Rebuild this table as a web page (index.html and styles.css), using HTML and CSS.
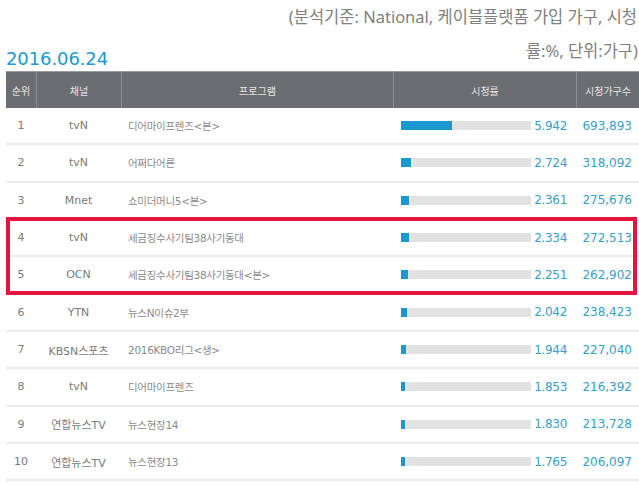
FILE: index.html
```html
<!DOCTYPE html>
<html lang="ko">
<head>
<meta charset="utf-8">
<link rel="stylesheet" href="styles.css">
</head>
<body>
<div class="page">
  <div class="note-top">(분석기준: National, 케이블플랫폼 가입 가구, 시청</div>
  <div class="title-row">
    <h2 class="date">2016.06.24</h2>
    <span class="note-bottom">률:%, 단위:가구)</span>
  </div>
  <div class="table-wrap">
    <table class="ratings">
      <colgroup>
        <col class="c-rank"><col class="c-ch"><col class="c-prog"><col class="c-rate"><col class="c-cnt">
      </colgroup>
      <thead>
        <tr><th>순위</th><th>채널</th><th>프로그램</th><th>시청률</th><th>시청가구수</th></tr>
      </thead>
      <tbody>
        <tr><td class="rank">1</td><td class="ch">tvN</td><td class="prog">디어마이프렌즈&lt;본&gt;</td><td><div class="rate"><div class="bar"><div class="fill" style="width:51px"></div></div><span class="val">5.942</span></div></td><td class="cnt">693,893</td></tr>
        <tr><td class="rank">2</td><td class="ch">tvN</td><td class="prog">어쩌다어른</td><td><div class="rate"><div class="bar"><div class="fill" style="width:10px"></div></div><span class="val">2.724</span></div></td><td class="cnt">318,092</td></tr>
        <tr><td class="rank">3</td><td class="ch">Mnet</td><td class="prog">쇼미더머니5&lt;본&gt;</td><td><div class="rate"><div class="bar"><div class="fill" style="width:8px"></div></div><span class="val">2.361</span></div></td><td class="cnt">275,676</td></tr>
        <tr><td class="rank">4</td><td class="ch">tvN</td><td class="prog">세금징수사기팀38사기동대</td><td><div class="rate"><div class="bar"><div class="fill" style="width:8px"></div></div><span class="val">2.334</span></div></td><td class="cnt">272,513</td></tr>
        <tr><td class="rank">5</td><td class="ch">OCN</td><td class="prog">세금징수사기팀38사기동대&lt;본&gt;</td><td><div class="rate"><div class="bar"><div class="fill" style="width:7px"></div></div><span class="val">2.251</span></div></td><td class="cnt">262,902</td></tr>
        <tr><td class="rank">6</td><td class="ch">YTN</td><td class="prog">뉴스N이슈2부</td><td><div class="rate"><div class="bar"><div class="fill" style="width:6px"></div></div><span class="val">2.042</span></div></td><td class="cnt">238,423</td></tr>
        <tr><td class="rank">7</td><td class="ch">KBSN스포츠</td><td class="prog">2016KBO리그&lt;생&gt;</td><td><div class="rate"><div class="bar"><div class="fill" style="width:5px"></div></div><span class="val">1.944</span></div></td><td class="cnt">227,040</td></tr>
        <tr><td class="rank">8</td><td class="ch">tvN</td><td class="prog">디어마이프렌즈</td><td><div class="rate"><div class="bar"><div class="fill" style="width:4px"></div></div><span class="val">1.853</span></div></td><td class="cnt">216,392</td></tr>
        <tr><td class="rank">9</td><td class="ch">연합뉴스TV</td><td class="prog">뉴스현장14</td><td><div class="rate"><div class="bar"><div class="fill" style="width:4px"></div></div><span class="val">1.830</span></div></td><td class="cnt">213,728</td></tr>
        <tr><td class="rank">10</td><td class="ch">연합뉴스TV</td><td class="prog">뉴스현장13</td><td><div class="rate"><div class="bar"><div class="fill" style="width:4px"></div></div><span class="val">1.765</span></div></td><td class="cnt">206,097</td></tr>
      </tbody>
    </table>
    <div class="highlight"></div>
  </div>
</div>
</body>
</html>
```

FILE: styles.css
```css
html, body {
  margin: 0;
  padding: 0;
  background: #ffffff;
  overflow: hidden;
}
.page {
  width: 639px;
  padding-left: 6px;
  box-sizing: border-box;
  font-family: "DejaVu Sans", "Noto Sans CJK KR", sans-serif;
}
.note-top {
  font-family: "Noto Sans", "Noto Sans CJK KR", sans-serif;
  font-size: 16.5px;
  line-height: 34px;
  height: 34px;
  color: #808080;
  text-align: right;
  white-space: nowrap;
  padding-right: 2px;
}
.title-row {
  display: flex;
  justify-content: space-between;
  height: 37px;
}
.date {
  margin: 13px 0 0 0;
  font-family: "DejaVu Sans", sans-serif;
  font-weight: normal;
  font-size: 18px;
  line-height: 24px;
  color: #2199cd;
  letter-spacing: -0.1px;
}
.note-bottom {
  margin-top: 5px;
  font-family: "Noto Sans", "Noto Sans CJK KR", sans-serif;
  font-size: 16.5px;
  line-height: 24px;
  height: 24px;
  color: #808080;
  padding-right: 1px;
  white-space: nowrap;
}
.table-wrap {
  position: relative;
  width: 633px;
}
.ratings {
  width: 633px;
  table-layout: fixed;
  border-collapse: separate;
  border-spacing: 0;
}
.c-rank { width: 30px; }
.c-ch { width: 85px; }
.c-prog { width: 272px; }
.c-rate { width: 183px; }
.c-cnt { width: 63px; }
.ratings thead tr {
  height: 37px;
}
.ratings th {
  background: #6c6d70;
  color: #e4e4e6;
  font-family: "Noto Sans CJK KR", sans-serif;
  font-weight: normal;
  font-size: 10px;
  padding: 0;
  border-top: 1px solid #9a9b9e;
  border-left: 1px solid #8b8c8f;
  text-align: center;
}
.ratings th:first-child {
  border-left: none;
}
.ratings tbody tr {
  height: 37.33px;
}
.ratings td {
  padding: 0;
  border-bottom: 2px solid #ebebeb;
  vertical-align: middle;
  white-space: nowrap;
  overflow: hidden;
}
.rank {
  text-align: center;
  font-size: 11px;
  color: #7a7a7a;
}
.ch {
  text-align: center;
  font-size: 11px;
  color: #7a7a7a;
}
.prog {
  padding-left: 7px !important;
  font-size: 10.5px;
  color: #8a8a8a;
  letter-spacing: -0.3px;
}
.rate {
  display: flex;
  align-items: center;
  padding-left: 8px;
  padding-right: 9px;
}
.bar {
  width: 130px;
  height: 9px;
  background: #e2e2e2;
  flex: none;
}
.fill {
  height: 100%;
  background: #1b98d0;
}
.val {
  flex: 1;
  text-align: right;
  font-size: 12px;
  color: #36a0ca;
  letter-spacing: -0.3px;
}
.cnt {
  text-align: right;
  padding-right: 7px !important;
  font-size: 12px;
  color: #36a0ca;
}
.highlight {
  position: absolute;
  left: 0;
  top: 146px;
  width: 631px;
  height: 78px;
  border: 4px solid #e3143e;
  box-sizing: border-box;
  pointer-events: none;
}
```
